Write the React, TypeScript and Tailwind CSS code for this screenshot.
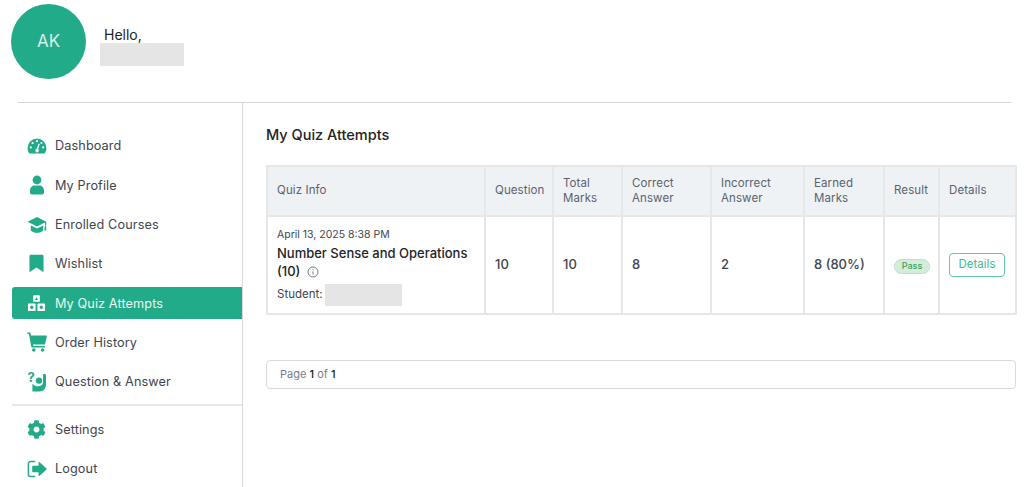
import { FaCog } from 'react-icons/fa';
import type { ReactNode } from 'react';

function GaugeIcon() {
  return (
    <svg viewBox="0 0 20 20" className="h-[20px] w-[20px]" fill="currentColor">
      <path d="M10 2.6a9.4 9.4 0 0 0-9.4 9.4c0 1.8.5 3.5 1.3 4.9a1 1 0 0 0 .8.5h14.6a1 1 0 0 0 .8-.5c.8-1.4 1.3-3.1 1.3-4.9A9.4 9.4 0 0 0 10 2.6z" />
      <g fill="#fff">
        <circle cx="10" cy="5.2" r="1.1" />
        <circle cx="5.6" cy="7" r="1.1" />
        <circle cx="3.8" cy="11.4" r="1.1" />
        <circle cx="14.4" cy="7" r="1.1" />
        <circle cx="16.2" cy="11.4" r="1.1" />
        <path d="M11.6 7.4 12.7 8l-1.4 5.2a1.8 1.8 0 1 1-1.7-.4z" />
      </g>
    </svg>
  );
}

function UserIcon() {
  return (
    <svg viewBox="0 0 20 20" className="h-[20px] w-[20px]" fill="currentColor">
      <circle cx="10" cy="5" r="4.4" />
      <path d="M3 15.4c0-3 2.2-5 4.6-5h4.8c2.4 0 4.6 2 4.6 5v2.2c0 1-.8 1.8-1.8 1.8H4.8c-1 0-1.8-.8-1.8-1.8z" />
    </svg>
  );
}

function CapIcon() {
  return (
    <svg viewBox="0 0 20 20" className="h-[20px] w-[20px]" fill="currentColor">
      <path d="M10 2 .6 6.8 10 11.6l8-4.1v2.9h1.2V6.8z" />
      <path d="M3.8 10.4v5c1.6 1.5 3.8 2.4 6.2 2.4s4.6-.9 6.2-2.4v-5L10 13.6z" />
      <path d="M17.8 11h1.2l.4 4.4h-2z" />
    </svg>
  );
}

function BookmarkIcon() {
  return (
    <svg viewBox="0 0 20 20" className="h-[19px] w-[19px]" fill="currentColor">
      <path d="M4 .8c-.8 0-1.4.6-1.4 1.4v17l7.4-5 7.4 5v-17c0-.8-.6-1.4-1.4-1.4z" />
    </svg>
  );
}

function QuizIcon() {
  return (
    <svg viewBox="0 0 20 20" className="h-[19px] w-[19px]" fill="currentColor">
      <path fillRule="evenodd" d="M7.2 1.2h5.6c.4 0 .7.3.7.7v5.6c0 .4-.3.7-.7.7H7.2a.7.7 0 0 1-.7-.7V1.9c0-.4.3-.7.7-.7zM10 3.1 8.4 6.2h3.2z" />
      <path fillRule="evenodd" d="M1.7 10h6.6c.4 0 .7.3.7.7v6.6c0 .4-.3.7-.7.7H1.7a.7.7 0 0 1-.7-.7v-6.6c0-.4.3-.7.7-.7zM5 12.2a1.8 1.8 0 1 0 0 3.6 1.8 1.8 0 0 0 0-3.6z" />
      <path fillRule="evenodd" d="M11.7 10h6.6c.4 0 .7.3.7.7v6.6c0 .4-.3.7-.7.7h-6.6a.7.7 0 0 1-.7-.7v-6.6c0-.4.3-.7.7-.7zM15 12.200a1.8 1.8 0 1 0 0 3.6 1.8 1.8 0 0 0 0-3.6z" />
    </svg>
  );
}

function CartIcon() {
  return (
    <svg viewBox="0 0 20 20" className="h-[20px] w-[20px]" fill="currentColor">
      <path d="M.4.6h2.2c.5 0 .9.3 1 .8L4 3.6h15.2c.4 0 .7.4.6.8l-1.6 7.4c-.1.4-.4.7-.8.7H6l.3 1.5h11.6v1.5H5.2c-.4 0-.8-.3-.9-.7L1.900 2.100H.4z" />
      <circle cx="6.8" cy="18" r="1.8" />
      <circle cx="15.6" cy="18" r="1.8" />
    </svg>
  );
}

// question mark sits top left, person with a raised arm on the right
function QaIcon() {
  return (
    <svg viewBox="0 0 20 20" className="h-[20px] w-[20px] overflow-visible" fill="currentColor">
      <circle cx="12" cy="8.6" r="3.2" />
      <path d="M5.4 11.4c1.200 1.800 3.200 2.900 5.800 2.900 2.600 0 4.400-1.300 4.800-3.500V3.100c0-.7.500-1.100 1.100-1.100h.8c.7 0 1.100.5 1.100 1.200v9.300c0 4-2.600 6.900-6.400 6.900H5.400z" />
      <text x="0.5" y="10" fontSize="13" fontWeight="700" fontFamily="Inter, sans-serif">?</text>
    </svg>
  );
}

function LogoutIcon() {
  return (
    <svg viewBox="0 0 20 20" className="h-[20px] w-[20px]" fill="currentColor">
      <path d="M7.6 2.6H3.4A2 2 0 0 0 1.4 4.6v10.800a2 2 0 0 0 2 2h4.200" fill="none" stroke="currentColor" strokeWidth="1.5" strokeLinecap="round" />
      <path d="M11.6 3.2c0-.4.5-.6.8-.3l7.100 6.600c.3.3.3.7 0 1l-7.100 6.600c-.3.3-.8.1-.8-.3v-3.600H6a.8.8 0 0 1-.8-.8V7.600c0-.4.4-.8.8-.8h5.600z" />
    </svg>
  );
}

type NavItem = { label: string; icon: ReactNode; active?: boolean };

const mainItems: NavItem[] = [
  { label: 'Dashboard', icon: <GaugeIcon /> },
  { label: 'My Profile', icon: <UserIcon /> },
  { label: 'Enrolled Courses', icon: <CapIcon /> },
  { label: 'Wishlist', icon: <BookmarkIcon /> },
  { label: 'My Quiz Attempts', icon: <QuizIcon />, active: true },
  { label: 'Order History', icon: <CartIcon /> },
  { label: 'Question & Answer', icon: <QaIcon /> },
];

const bottomItems: NavItem[] = [
  { label: 'Settings', icon: <FaCog size={19} /> },
  { label: 'Logout', icon: <LogoutIcon /> },
];

function NavRow({ item }: { item: NavItem }) {
  return (
    <a
      href="#"
      className={
        item.active
          ? 'flex h-[32px] items-center rounded-l-[3px] bg-[#21ab88] text-white/90'
          : 'flex h-[32px] items-center text-[#41454f]'
      }
    >
      <span
        className={
          item.active
            ? 'flex w-[43px] shrink-0 justify-center pl-[6px] text-white'
            : 'flex w-[43px] shrink-0 justify-center pl-[6px] text-[#21ab88]'
        }
      >
        {item.icon}
      </span>
      <span className="text-[12.7px] tracking-[0.1px]">{item.label}</span>
    </a>
  );
}

const th = 'border-2 border-[#e6e7e9] bg-[#eff2f5] px-[9px] text-left align-middle text-[11.5px] font-normal leading-[15.5px] tracking-[0.1px] text-[#5b616f]';
const td = 'border-2 border-[#e6e7e9] px-[9px] align-middle text-[13px] font-medium text-[#41454f]';

export default function App() {
  return (
    <div className="h-[487px] w-[1024px] overflow-hidden bg-white font-['Inter',sans-serif] text-[#212327]">
      <header className="flex h-[102px] items-start pl-[11px] pt-[4px]">
        <div className="flex h-[75px] w-[75px] items-center justify-center rounded-full bg-[#21ab88] pt-[1px] text-[17px] text-white/80">
          AK
        </div>
        <div className="ml-[14px] pt-[23px]">
          <p className="pl-[4px] text-[14px] leading-[16px]">Hello,</p>
          <div className="h-[23px] w-[84px] bg-[#e5e5e5]" />
        </div>
      </header>

      <div className="mx-[13px] ml-[18px] h-px bg-[#d6d6d9]" />

      <div className="flex">
        <aside className="ml-[12px] h-[384px] w-[231px] shrink-0 border-r border-[#d9dadd] pt-[27px]">
          <nav className="flex flex-col gap-[7.3px]">
            {mainItems.map((item) => (
              <NavRow key={item.label} item={item} />
            ))}
          </nav>
          <div className="mb-[8px] mt-[6px] h-[2px] bg-[#e6e7e9]" />
          <nav className="flex flex-col gap-[7px]">
            {bottomItems.map((item) => (
              <NavRow key={item.label} item={item} />
            ))}
          </nav>
        </aside>

        <main className="ml-[23px] w-[750px] shrink-0">
          <h1 className="mt-[22px] text-[14.5px] font-medium leading-[20px] text-[#212327]">My Quiz Attempts</h1>

          <table className="mt-[20px] w-[749px] table-fixed border-collapse">
            <colgroup>
              <col className="w-[218px]" />
              <col className="w-[68px]" />
              <col className="w-[69px]" />
              <col className="w-[89px]" />
              <col className="w-[93px]" />
              <col className="w-[80px]" />
              <col className="w-[55px]" />
              <col className="w-[77px]" />
            </colgroup>
            <thead>
              <tr className="h-[50px]">
                <th className={th}>Quiz Info</th>
                <th className={th}>Question</th>
                <th className={th}>Total Marks</th>
                <th className={th}>Correct Answer</th>
                <th className={th}>Incorrect Answer</th>
                <th className={th}>Earned Marks</th>
                <th className={th}>Result</th>
                <th className={th}>Details</th>
              </tr>
            </thead>
            <tbody>
              <tr className="h-[98px]">
                <td className={td}>
                  <div className="pt-[3px]">
                    <p className="text-[10.5px] font-normal leading-[16px]">April 13, 2025 8:38 PM</p>
                    <p className="mt-[2px] text-[13px] font-medium leading-[17.5px] text-[#212327]">
                      Number Sense and Operations (10)
                      <svg viewBox="0 0 12 12" className="ml-[7px] inline h-[12px] w-[12px] text-[#757c8e]" fill="none" stroke="currentColor" strokeWidth="1">
                        <circle cx="6" cy="6" r="5" />
                        <path d="M6 5.4v3M6 3.2v1" />
                      </svg>
                    </p>
                    <div className="mt-[4px] flex items-center text-[11.5px] font-normal">
                      <span>Student:</span>
                      <span className="ml-[2px] h-[22px] w-[77px] bg-[#e5e5e5]" />
                    </div>
                  </div>
                </td>
                <td className={td}>10</td>
                <td className={td}>10</td>
                <td className={td}>8</td>
                <td className={td}>2</td>
                <td className={td}>8 (80%)</td>
                <td className={td}>
                  <span className="inline-flex h-[15px] w-[36px] items-center justify-center rounded-full border border-[#b9e2c6] bg-[#d3ecdb] text-[9px] font-medium tracking-normal text-[#3f9d5f]">
                    Pass
                  </span>
                </td>
                <td className="border-2 border-[#e6e7e9] px-[9px] align-middle">
                  <button
                    type="button"
                    className="flex h-[24px] w-[56px] items-center justify-center rounded-[4px] border border-[#5fc9ab] text-[11.5px] text-[#3dbb99]"
                  >
                    Details
                  </button>
                </td>
              </tr>
            </tbody>
          </table>

          <div className="mt-[45px] flex h-[29px] items-center rounded-[4px] border border-[#d9d9e0] px-[13px] text-[11px] text-[#757c8e]">
            <span>
              Page <b className="font-medium text-[#212327]">1</b> of <b className="font-medium text-[#212327]">1</b>
            </span>
          </div>
        </main>
      </div>
    </div>
  );
}
